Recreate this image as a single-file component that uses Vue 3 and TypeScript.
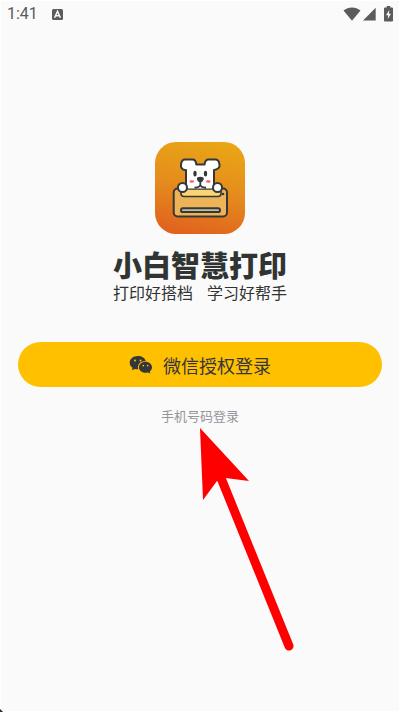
<script setup lang="ts">
interface Brand {
  name: string
  slogans: string[]
}

const time = '1:41'
const brand: Brand = {
  name: '小白智慧打印',
  slogans: ['打印好搭档', '学习好帮手'],
}
</script>

<template>
  <div class="screen">
    <header class="status">
      <span class="time">{{ time }}</span>
      <svg class="badge" viewBox="0 0 11 11" aria-hidden="true">
        <rect width="11" height="11" rx="1.5" fill="#5b5b5b" />
        <path d="M2.6 8.7 5.5 2.3 8.4 8.7M3.8 6.7h3.4" fill="none" stroke="#fafafa" stroke-width="1.5" />
      </svg>
      <div class="indicators">
        <svg width="18" height="14" viewBox="0 0 18 14" aria-hidden="true">
          <path d="M0.5 3.6C5.5-.6 12.500-.6 17.500 3.600L9 13.700Z" fill="#5b5b5b" />
        </svg>
        <svg width="13" height="14" viewBox="0 0 13 14" aria-hidden="true">
          <path d="M12.700.700V13.500H0Z" fill="#5b5b5b" />
        </svg>
        <svg class="battery" width="9" height="16" viewBox="0 0 9 16" aria-hidden="true">
          <path d="M2.700 0h3.600v1.600H8q1 0 1 1v12q0 1-1 1H1q-1 0-1-1v-12q0-1 1-1h1.700Z" fill="#5b5b5b" />
          <path d="M5.300 4 2 9.300h2.200L3.700 13 7 7.700H4.900Z" fill="#fafafa" />
        </svg>
      </div>
    </header>

    <main class="content">
      <svg class="logo" viewBox="0 0 90 92" role="img" aria-label="小白智慧打印">
        <defs>
          <linearGradient id="tile" x1="0.600" y1="0" x2="0.400" y2="1">
            <stop offset="0" stop-color="#e9a516" />
            <stop offset="0.500" stop-color="#e58c1d" />
            <stop offset="1" stop-color="#e1631e" />
          </linearGradient>
        </defs>
        <rect width="90" height="92" rx="21" fill="url(#tile)" />
        <g stroke="#343837" stroke-width="2" stroke-linejoin="round" stroke-linecap="round">
          <path
            d="M31 46V28C27 28.500 25.500 25 26 22.500C26.500 20.500 26.300 17.500 30 17.500H37.500C40 17.500 41 19 41.300 22.500H49.500C50 19 51 17.500 53.500 17.500H60.500C64 17.500 64 20.500 64.500 22.500C65 25 63 28 59 28V46Z"
            fill="#fff"
          />
          <rect x="18.700" y="46.500" width="53.300" height="28" rx="4" fill="#edb457" />
          <path d="M26 47H66V51.500Q66 54.500 63 54.500H29Q26 54.500 26 51.500Z" fill="#fbd575" stroke-width="1.600" />
          <path d="M32 46.500V38H58V46.500Z" fill="#fff" stroke="none" />
          <rect x="26" y="66.300" width="39" height="3.800" rx="1.900" fill="#c5bda3" />
          <circle cx="27.500" cy="45.500" r="4.500" fill="#fff" />
          <circle cx="62.500" cy="45.500" r="4.500" fill="#fff" />
        </g>
        <ellipse cx="40" cy="31.700" rx="1.700" ry="2.900" fill="#343837" />
        <ellipse cx="50.500" cy="31.700" rx="1.700" ry="2.900" fill="#343837" />
        <path d="M41.800 36.700Q42 34.800 45.300 34.800T48.800 36.700Q48 40.300 45.300 40.300T41.800 36.700Z" fill="#343837" />
        <path
          d="M45.300 39V43.500M39.500 45.500Q43.500 46 45.300 43.500Q47.100 46 51.100 45.500"
          fill="none"
          stroke="#343837"
          stroke-width="1.800"
        />
        <ellipse cx="36.800" cy="39.500" rx="2.300" ry="1.200" fill="#f35f65" />
        <ellipse cx="53.300" cy="39.500" rx="2.300" ry="1.200" fill="#f35f65" />
        <circle cx="68" cy="52" r="1.300" fill="#343837" />
      </svg>

      <h1 class="name">{{ brand.name }}</h1>
      <p class="slogans">
        <span v-for="slogan in brand.slogans" :key="slogan">{{ slogan }}</span>
      </p>

      <button class="login" type="button">
        <svg width="24" height="20" viewBox="0 0 24 20" aria-hidden="true">
          <path
            d="M8.800 1C4.200 1 .700 3.900.700 7.700C.700 9.800 1.800 11.600 3.500 12.800L3 15.300L5.800 13.900Q7.400 14.400 9.200 14.300C8 9.500 11.500 6 16.700 6C16 3 12.800 1 8.800 1Z"
            fill="#35363c"
          />
          <path
            d="M16.500 6.800C12.700 6.800 9.900 9.300 9.900 12.300S12.700 17.800 16.500 17.800Q17.800 17.800 19 17.400L21.300 18.600L20.800 16.500C22.300 15.500 23 14 23 12.300C23 9.300 20.200 6.800 16.500 6.800Z"
            fill="#35363c"
          />
          <g fill="#ffc000">
            <circle cx="6" cy="5.600" r="1" />
            <circle cx="11.500" cy="5.600" r="1" />
            <circle cx="14.300" cy="10.600" r="0.850" />
            <circle cx="18.700" cy="10.600" r="0.850" />
          </g>
        </svg>
        <span>微信授权登录</span>
      </button>
      <a class="phone" href="#phone">手机号码登录</a>

      <svg class="pointer" viewBox="0 0 96 224" aria-hidden="true">
        <path d="M21 50 89 218" stroke="#f00" stroke-width="9" stroke-linecap="round" />
        <path d="M0 0 49 53 25.500 50 17 53 3 72Z" fill="#f00" />
      </svg>
    </main>
    <i class="corner"></i>
  </div>
</template>

<style>
body {
  background: #fafafa;
}
</style>

<style scoped>
.screen {
  position: relative;
  box-sizing: border-box;
  min-height: 100vh;
  background: #fafafa;
  box-shadow: inset 0 0 0 1px #fff;
  color: #303432;
  font-family: "Noto Sans CJK SC", sans-serif;
}

.status {
  display: flex;
  align-items: center;
  height: 28px;
  padding: 0 7px;
}

.time {
  color: #5b5b5b;
  font: 16px/28px Roboto, sans-serif;
}

.badge {
  width: 11px;
  height: 11px;
  margin-left: 14px;
}

.indicators {
  display: flex;
  align-items: center;
  gap: 2px;
  margin-left: auto;
}

.battery {
  margin-left: 6px;
}

.content {
  position: relative;
  display: flex;
  flex-direction: column;
  align-items: center;
  padding: 114px 18px 0;
}

.logo {
  width: 90px;
  height: 92px;
}

.name {
  margin: 16px 0 0;
  font-size: 29px;
  font-weight: 900;
  line-height: 29px;
}

.slogans {
  display: flex;
  gap: 14px;
  margin: 4px 0 0;
  font-size: 16px;
  line-height: 18px;
}

.login {
  display: flex;
  align-items: center;
  justify-content: center;
  gap: 10px;
  width: 100%;
  height: 45px;
  margin-top: 41px;
  padding: 0;
  border: 0;
  border-radius: 23px;
  background: #ffc000;
  color: #35363c;
  font-family: inherit;
  font-size: 18px;
  line-height: 24px;
}

.phone {
  margin-top: 19px;
  color: #94949b;
  font-size: 13px;
  line-height: 20px;
  text-decoration: none;
}

.pointer {
  position: absolute;
  top: 400px;
  left: 50%;
  width: 96px;
  height: 224px;
}

.corner {
  position: absolute;
  bottom: 0;
  left: 0;
  width: 4px;
  height: 4px;
  background: linear-gradient(45deg, #333 30%, transparent 50%);
}
</style>
